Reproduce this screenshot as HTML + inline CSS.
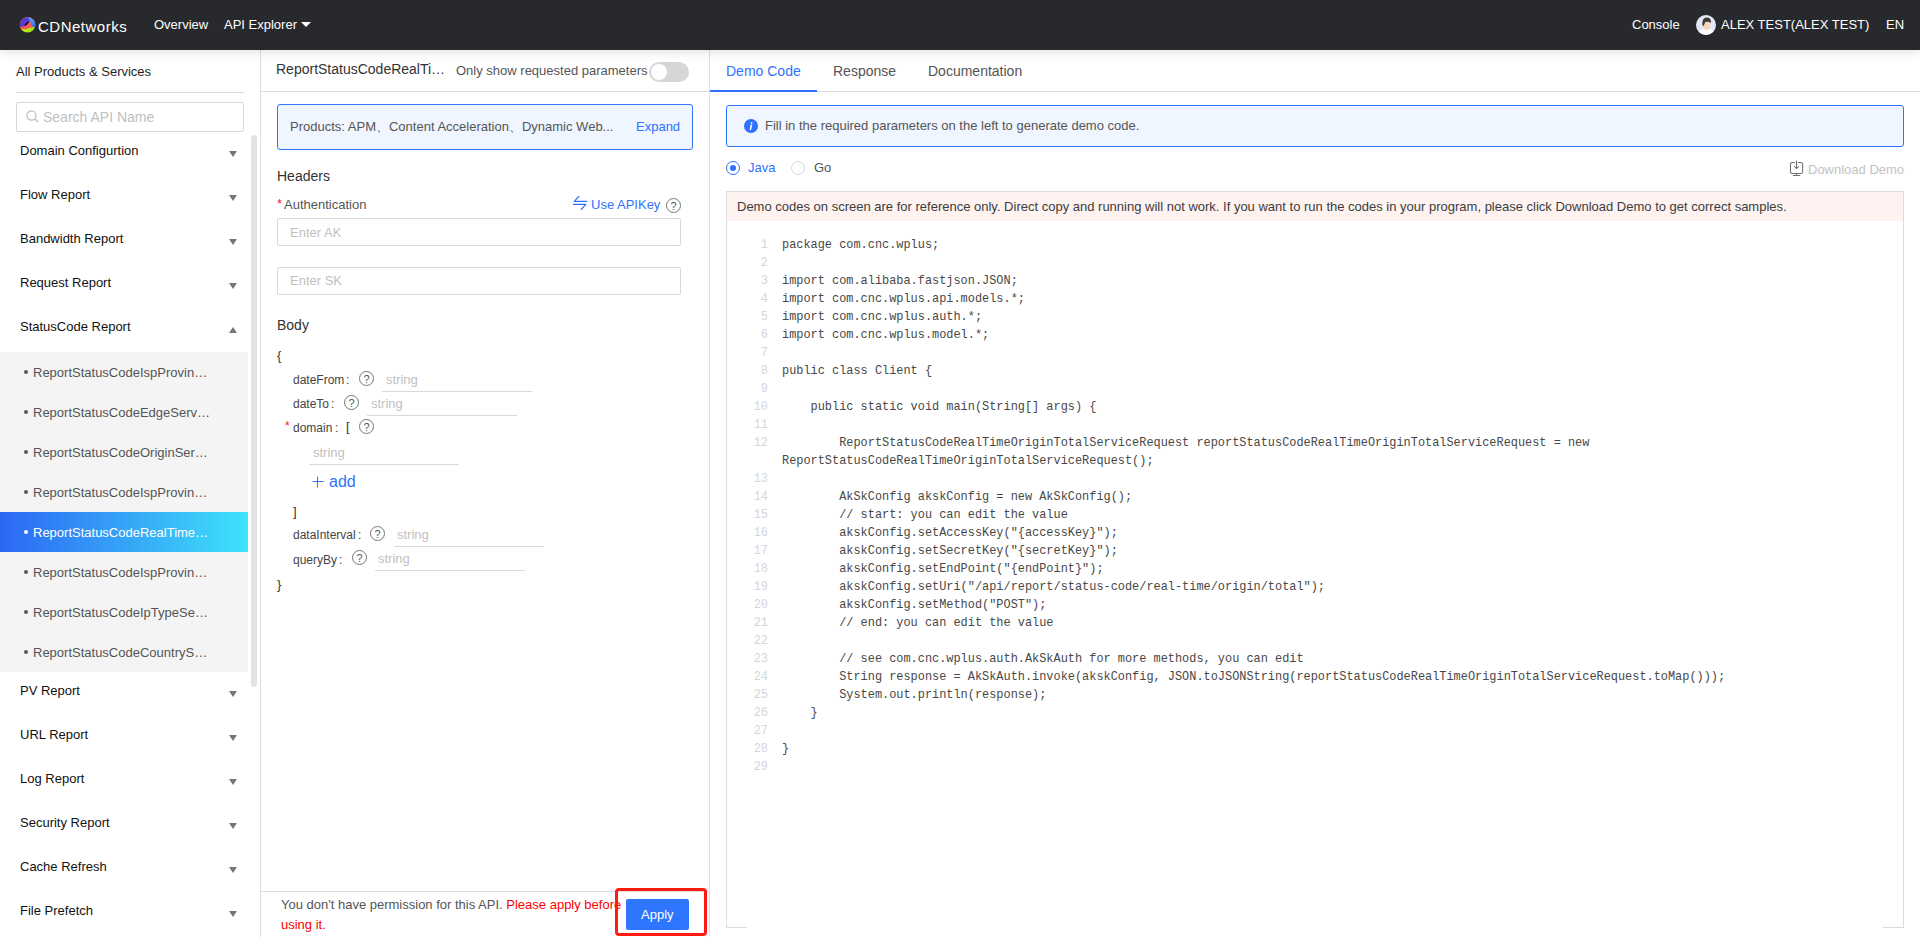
<!DOCTYPE html>
<html><head><meta charset="utf-8">
<style>
html,body{margin:0;padding:0;width:1920px;height:937px;overflow:hidden;background:#fff;}
body{position:relative;font-family:"Liberation Sans",sans-serif;font-size:13px;color:#333;}
.a{position:absolute;}
.t{position:absolute;white-space:pre;line-height:1;}
.s12{font-size:12px}.s13{font-size:13px}.s14{font-size:14px}.s16{font-size:16px}
.blue{color:#2e72ff}
.ph{color:#bfbfbf}
.tri-d{position:absolute;width:0;height:0;border-left:4.5px solid transparent;border-right:4.5px solid transparent;border-top:6px solid #777;}
.tri-u{position:absolute;width:0;height:0;border-left:4.5px solid transparent;border-right:4.5px solid transparent;border-bottom:6px solid #777;}
.mi{position:absolute;left:20px;color:#111;font-size:13px;line-height:1;white-space:pre;}
.si{position:absolute;left:33px;color:#555;font-size:13px;line-height:1;white-space:pre;}
.dot{position:absolute;left:24px;width:4px;height:4px;border-radius:50%;background:#555;}
.hl{position:absolute;}
.help{position:absolute;width:13px;height:13px;border:1px solid #777;border-radius:50%;box-sizing:content-box;}
.help:after{content:"?";position:absolute;left:0;top:2px;width:13px;text-align:center;font-size:11px;line-height:1;color:#555;}
.ul{position:absolute;height:1px;background:#d9d9d9;width:150px;}
.code{position:absolute;left:782px;top:236px;font-family:"Liberation Mono",monospace;font-size:11.92px;line-height:18px;white-space:pre;color:#484848;}
.ln{position:absolute;left:740px;width:28px;top:236px;font-family:"Liberation Mono",monospace;font-size:11.92px;line-height:18px;white-space:pre;color:#d3d6dc;text-align:right;}
</style></head><body>

<!-- HEADER -->
<div class="a" style="left:0;top:0;width:1920px;height:50px;background:#28292d;box-shadow:0 2px 10px rgba(0,0,0,0.12);z-index:5;"></div>
<div class="a" style="left:0;top:0;width:1920px;height:50px;z-index:6;">
  <svg class="a" style="left:16px;top:14px" width="24" height="22" viewBox="0 0 24 22">
    <defs>
      <clipPath id="lc"><circle cx="11.6" cy="10.9" r="7.7"/></clipPath>
      <linearGradient id="lgy" x1="0" y1="0" x2="1" y2="0"><stop offset="0" stop-color="#e8f31c"/><stop offset="1" stop-color="#6fe017"/></linearGradient>
      <linearGradient id="lgb" x1="0" y1="0" x2="0.3" y2="1"><stop offset="0" stop-color="#63bdf0"/><stop offset="1" stop-color="#3a6cf5"/></linearGradient>
    </defs>
    <g clip-path="url(#lc)">
      <rect x="0" y="0" width="24" height="22" fill="url(#lgy)"/>
      <path d="M0 13.6 Q4 15 9.4 15.4 Q13 14 18 12.8 L24 12 L24 0 L0 0Z" fill="#ff5454"/>
      <path d="M0 11.5 Q3 13.2 6 12.8 L9 11.9 L13.6 7 L13.8 0 L0 0Z" fill="#5c36d6"/>
      <path d="M11.5 0 L12.3 3.3 Q13.4 5.5 14 7.5 Q15 11 17.4 13.2 L24 13 L24 0Z" fill="url(#lgb)"/>
    </g>
    <ellipse cx="10.8" cy="9.6" rx="3.2" ry="0.9" transform="rotate(-45 10.8 9.6)" fill="#111"/>
  </svg>
  <div class="t" style="left:38px;top:19px;color:#fff;font-size:15px;letter-spacing:0.5px;">CDNetworks</div>
  <div class="t s13" style="left:154px;top:18px;color:#fff;">Overview</div>
  <div class="t s13" style="left:224px;top:18px;color:#fff;">API Explorer</div>
  <div class="a" style="left:301px;top:22px;width:0;height:0;border-left:5px solid transparent;border-right:5px solid transparent;border-top:5px solid #fff;"></div>
  <div class="t s13" style="left:1632px;top:18px;color:#fff;">Console</div>
  <svg class="a" style="left:1696px;top:15px" width="20" height="20" viewBox="0 0 20 20">
    <defs><clipPath id="cp"><circle cx="10" cy="10" r="10"/></clipPath></defs>
    <g clip-path="url(#cp)">
      <rect width="20" height="20" fill="#e4e7f8"/>
      <path d="M0 21 Q1.5 15.2 7.5 14.4 H13.5 Q18.5 15.2 20 21Z" fill="#fff"/>
      <path d="M7.4 7 V11.8 Q7.6 14.8 10.7 14.8 Q13.9 14.8 14.1 11.8 V7 Z" fill="#f8d3b4"/>
      <path d="M6.4 10.5 Q5.6 2.6 10.8 2.6 Q15.6 2.6 14.9 8.3 Q13.2 6.4 9.2 7 Q8.6 9.6 7.4 11 Z" fill="#3a3a3a"/>
    </g>
  </svg>
  <div class="t s13" style="left:1721px;top:18px;color:#fff;">ALEX TEST(ALEX TEST)</div>
  <div class="t s13" style="left:1886px;top:18px;color:#fff;">EN</div>
</div>

<!-- SIDEBAR -->
<div class="t s13" style="left:16px;top:65px;color:#1f1f1f;">All Products &amp; Services</div>
<div class="a" style="left:16px;top:92px;width:228px;height:1px;background:#dcdcdc;"></div>
<div class="a" style="left:16px;top:102px;width:226px;height:28px;border:1px solid #d9d9d9;border-radius:2px;"></div>
<svg class="a" style="left:26px;top:110px" width="13" height="13" viewBox="0 0 13 13"><circle cx="5.5" cy="5.5" r="4.6" stroke="#bfbfbf" stroke-width="1.2" fill="none"/><path d="M8.8 8.8 L12 12" stroke="#bfbfbf" stroke-width="1.3"/></svg>
<div class="t s14 ph" style="left:43px;top:110px;">Search API Name</div>

<div class="mi" style="top:144px;">Domain Configurtion</div><div class="tri-d" style="left:229px;top:151px;"></div>
<div class="mi" style="top:188px;">Flow Report</div><div class="tri-d" style="left:229px;top:195px;"></div>
<div class="mi" style="top:232px;">Bandwidth Report</div><div class="tri-d" style="left:229px;top:239px;"></div>
<div class="mi" style="top:276px;">Request Report</div><div class="tri-d" style="left:229px;top:283px;"></div>
<div class="mi" style="top:320px;">StatusCode Report</div><div class="tri-u" style="left:229px;top:327px;"></div>

<div class="a" style="left:0;top:352px;width:248px;height:320px;background:#f4f4f4;"></div>
<div class="a" style="left:0;top:512px;width:248px;height:40px;background:linear-gradient(90deg,#2d67f4 0%,#37b0f7 60%,#3fe3fb 100%);"></div>
<div class="dot" style="top:370px;"></div><div class="si" style="top:366px;">ReportStatusCodeIspProvin…</div>
<div class="dot" style="top:410px;"></div><div class="si" style="top:406px;">ReportStatusCodeEdgeServ…</div>
<div class="dot" style="top:450px;"></div><div class="si" style="top:446px;">ReportStatusCodeOriginSer…</div>
<div class="dot" style="top:490px;"></div><div class="si" style="top:486px;">ReportStatusCodeIspProvin…</div>
<div class="dot" style="top:530px;background:#fff;"></div><div class="si" style="top:526px;color:#fff;">ReportStatusCodeRealTime…</div>
<div class="dot" style="top:570px;"></div><div class="si" style="top:566px;">ReportStatusCodeIspProvin…</div>
<div class="dot" style="top:610px;"></div><div class="si" style="top:606px;">ReportStatusCodeIpTypeSe…</div>
<div class="dot" style="top:650px;"></div><div class="si" style="top:646px;">ReportStatusCodeCountryS…</div>

<div class="mi" style="top:684px;">PV Report</div><div class="tri-d" style="left:229px;top:691px;"></div>
<div class="mi" style="top:728px;">URL Report</div><div class="tri-d" style="left:229px;top:735px;"></div>
<div class="mi" style="top:772px;">Log Report</div><div class="tri-d" style="left:229px;top:779px;"></div>
<div class="mi" style="top:816px;">Security Report</div><div class="tri-d" style="left:229px;top:823px;"></div>
<div class="mi" style="top:860px;">Cache Refresh</div><div class="tri-d" style="left:229px;top:867px;"></div>
<div class="mi" style="top:904px;">File Prefetch</div><div class="tri-d" style="left:229px;top:911px;"></div>

<div class="a" style="left:251px;top:135px;width:6px;height:552px;background:#e3e3e3;border-radius:3px;"></div>
<div class="a" style="left:260px;top:50px;width:1px;height:887px;background:#dedede;"></div>

<!-- MIDDLE -->
<div class="t s14" style="left:276px;top:62px;color:#333;">ReportStatusCodeRealTi…</div>
<div class="t s13" style="left:456px;top:64px;color:#555;">Only show requested parameters</div>
<div class="a" style="left:649px;top:62px;width:40px;height:20px;border-radius:10px;background:#d6d6d6;"></div>
<div class="a" style="left:651px;top:64px;width:16px;height:16px;border-radius:50%;background:#fff;"></div>
<div class="a" style="left:261px;top:91px;width:448px;height:1px;background:#dedede;"></div>

<div class="a" style="left:277px;top:104px;width:414px;height:44px;border:1px solid #2e75ff;border-radius:3px;background:#eff6ff;"></div>
<div class="t s13" style="left:290px;top:120px;color:#555;">Products: APM、Content Acceleration、Dynamic Web...</div>
<div class="t s13 blue" style="left:636px;top:120px;">Expand</div>

<div class="t s14" style="left:277px;top:169px;color:#333;">Headers</div>
<div class="t s13" style="left:277px;top:197px;color:#f5222d;">*</div>
<div class="t s13" style="left:284px;top:198px;color:#555;">Authentication</div>
<svg class="a" style="left:568px;top:192px" width="24" height="22" viewBox="0 0 24 22"><path d="M10.8 4.5 L6.2 9.4 H18.8 M5.3 12.4 H17.8 L13.3 17.5" stroke="#2e72ff" stroke-width="1.15" stroke-linecap="round" stroke-linejoin="round" fill="none"/></svg>
<div class="t s13 blue" style="left:591px;top:198px;">Use APIKey</div>
<div class="help" style="left:666px;top:198px;"></div>
<div class="a" style="left:277px;top:218px;width:402px;height:26px;border:1px solid #d9d9d9;border-radius:2px;"></div>
<div class="t s13 ph" style="left:290px;top:226px;">Enter AK</div>
<div class="a" style="left:277px;top:267px;width:402px;height:26px;border:1px solid #d9d9d9;border-radius:2px;"></div>
<div class="t s13 ph" style="left:290px;top:274px;">Enter SK</div>

<div class="t s14" style="left:277px;top:318px;color:#333;">Body</div>
<div class="t s13" style="left:277px;top:349px;color:#333;">{</div>

<div class="t s12" style="left:293px;top:374px;color:#444;">dateFrom</div>
<div class="t s12" style="left:346px;top:374px;color:#444;">:</div>
<div class="help" style="left:359px;top:371px;"></div>
<div class="t s13 ph" style="left:386px;top:373px;">string</div>
<div class="ul" style="left:382px;top:391px;"></div>

<div class="t s12" style="left:293px;top:398px;color:#444;">dateTo</div>
<div class="t s12" style="left:331px;top:398px;color:#444;">:</div>
<div class="help" style="left:344px;top:395px;"></div>
<div class="t s13 ph" style="left:371px;top:397px;">string</div>
<div class="ul" style="left:367px;top:415px;"></div>

<div class="t s12" style="left:285px;top:420px;color:#f5222d;">*</div>
<div class="t s12" style="left:293px;top:422px;color:#444;">domain</div>
<div class="t s12" style="left:335px;top:422px;color:#444;">:</div>
<div class="t s13" style="left:346px;top:420px;color:#333;">[</div>
<div class="help" style="left:359px;top:419px;"></div>

<div class="t s13 ph" style="left:313px;top:446px;">string</div>
<div class="ul" style="left:309px;top:464px;"></div>
<svg class="a" style="left:312px;top:476px" width="12" height="12" viewBox="0 0 12 12"><path d="M5.5 0.5 V11.5 M0.5 5.5 H11.5" stroke="#2e72ff" stroke-width="1"/></svg>
<div class="t s16 blue" style="left:329px;top:474px;">add</div>
<div class="t s13" style="left:293px;top:505px;color:#333;">]</div>

<div class="t s12" style="left:293px;top:529px;color:#444;">dataInterval</div>
<div class="t s12" style="left:358px;top:529px;color:#444;">:</div>
<div class="help" style="left:370px;top:526px;"></div>
<div class="t s13 ph" style="left:397px;top:528px;">string</div>
<div class="ul" style="left:394px;top:546px;"></div>

<div class="t s12" style="left:293px;top:554px;color:#444;">queryBy</div>
<div class="t s12" style="left:339px;top:554px;color:#444;">:</div>
<div class="help" style="left:352px;top:550px;"></div>
<div class="t s13 ph" style="left:378px;top:552px;">string</div>
<div class="ul" style="left:375px;top:570px;"></div>
<div class="t s13" style="left:277px;top:578px;color:#333;">}</div>

<div class="a" style="left:261px;top:891px;width:448px;height:1px;background:#dedede;"></div>
<div class="t s13" style="left:281px;top:898px;color:#555;">You don't have permission for this API. <span style="color:#ff0000">Please apply before</span></div>
<div class="t s13" style="left:281px;top:918px;color:#ff0000;">using it.</div>
<div class="a" style="left:626px;top:899px;width:63px;height:31px;background:#2e76ff;border-radius:2px;"></div>
<div class="t s13" style="left:641px;top:908px;color:#fff;">Apply</div>
<div class="a" style="left:615px;top:888px;width:86px;height:42px;border:3px solid #ff1a12;border-radius:4px;"></div>
<div class="a" style="left:709px;top:50px;width:1px;height:887px;background:#dedede;"></div>

<!-- RIGHT -->
<div class="t s14 blue" style="left:726px;top:64px;">Demo Code</div>
<div class="t s14" style="left:833px;top:64px;color:#555;">Response</div>
<div class="t s14" style="left:928px;top:64px;color:#555;">Documentation</div>
<div class="a" style="left:710px;top:91px;width:1210px;height:1px;background:#dedede;"></div>
<div class="a" style="left:710px;top:90px;width:107px;height:2px;background:#2e72ff;"></div>

<div class="a" style="left:726px;top:105px;width:1176px;height:40px;border:1px solid #2e75ff;border-radius:3px;background:#eff6ff;"></div>
<svg class="a" style="left:744px;top:119px" width="14" height="14" viewBox="0 0 14 14"><circle cx="7" cy="7" r="7" fill="#2e72ff"/><path d="M7.6 3.2 a0.9 0.9 0 1 0 0.01 0Z" fill="#fff"/><path d="M6.6 5.8 H8.2 L7.1 11 H5.6Z" fill="#fff"/></svg>
<div class="t s13" style="left:765px;top:119px;color:#555;">Fill in the required parameters on the left to generate demo code.</div>

<div class="a" style="left:726px;top:161px;width:12px;height:12px;border:1px solid #2e72ff;border-radius:50%;"></div>
<div class="a" style="left:730px;top:165px;width:6px;height:6px;border-radius:50%;background:#2e72ff;"></div>
<div class="t s13 blue" style="left:748px;top:161px;">Java</div>
<div class="a" style="left:791px;top:161px;width:12px;height:12px;border:1px solid #d9d9d9;border-radius:50%;"></div>
<div class="t s13" style="left:814px;top:161px;color:#555;">Go</div>

<svg class="a" style="left:1784px;top:156px" width="24" height="24" viewBox="0 0 24 24"><path d="M10.6 6.5 H8 Q6.5 6.5 6.5 8 V15.9 Q6.5 17.4 8 17.4 H17.1 Q18.6 17.4 18.6 15.9 V8 Q18.6 6.5 17.1 6.5 H14.3 M12.5 5.1 V12.6 M10.4 10.5 L12.5 12.6 L14.6 10.5 M12.5 17.4 V19.5 M9.3 19.5 H15.8" stroke="#707070" stroke-width="1.05" stroke-linecap="round" fill="none"/></svg>
<div class="t s13" style="left:1808px;top:163px;color:#c2c2c2;">Download Demo</div>

<div class="a" style="left:726px;top:191px;width:1176px;height:736px;border:1px solid #dcdcdc;border-bottom:none;"></div>
<div class="a" style="left:726px;top:927px;width:21px;height:1px;background:#dcdcdc;"></div>
<div class="a" style="left:1883px;top:927px;width:21px;height:1px;background:#dcdcdc;"></div>
<div class="a" style="left:727px;top:192px;width:1176px;height:29px;background:#fef3f0;"></div>
<div class="t s13" style="left:737px;top:200px;color:#3c3c3c;">Demo codes on screen are for reference only. Direct copy and running will not work. If you want to run the codes in your program, please click Download Demo to get correct samples.</div>

<div class="ln">1
2
3
4
5
6
7
8
9
10
11
12

13
14
15
16
17
18
19
20
21
22
23
24
25
26
27
28
29</div>
<div class="code">package com.cnc.wplus;

import com.alibaba.fastjson.JSON;
import com.cnc.wplus.api.models.*;
import com.cnc.wplus.auth.*;
import com.cnc.wplus.model.*;

public class Client {

    public static void main(String[] args) {

        ReportStatusCodeRealTimeOriginTotalServiceRequest reportStatusCodeRealTimeOriginTotalServiceRequest = new
ReportStatusCodeRealTimeOriginTotalServiceRequest();

        AkSkConfig akskConfig = new AkSkConfig();
        // start: you can edit the value
        akskConfig.setAccessKey("{accessKey}");
        akskConfig.setSecretKey("{secretKey}");
        akskConfig.setEndPoint("{endPoint}");
        akskConfig.setUri("/api/report/status-code/real-time/origin/total");
        akskConfig.setMethod("POST");
        // end: you can edit the value

        // see com.cnc.wplus.auth.AkSkAuth for more methods, you can edit
        String response = AkSkAuth.invoke(akskConfig, JSON.toJSONString(reportStatusCodeRealTimeOriginTotalServiceRequest.toMap()));
        System.out.println(response);
    }

}
</div>

</body></html>
